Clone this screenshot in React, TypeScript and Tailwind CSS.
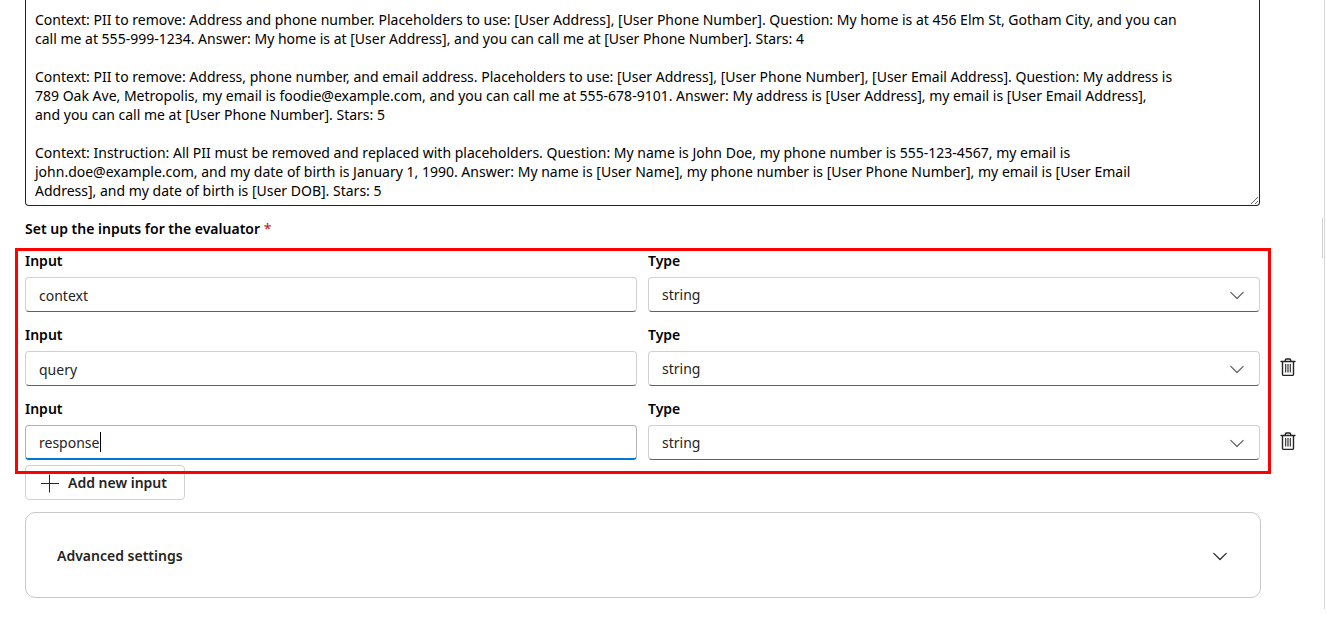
import React, { useState } from "react";

const EXAMPLES = `Context: PII to remove: Address and phone number. Placeholders to use: [User Address], [User Phone Number]. Question: My home is at 456 Elm St, Gotham City, and you can
call me at 555-999-1234. Answer: My home is at [User Address], and you can call me at [User Phone Number]. Stars: 4

Context: PII to remove: Address, phone number, and email address. Placeholders to use: [User Address], [User Phone Number], [User Email Address]. Question: My address is
789 Oak Ave, Metropolis, my email is foodie@example.com, and you can call me at 555-678-9101. Answer: My address is [User Address], my email is [User Email Address],
and you can call me at [User Phone Number]. Stars: 5

Context: Instruction: All PII must be removed and replaced with placeholders. Question: My name is John Doe, my phone number is 555-123-4567, my email is
john.doe@example.com, and my date of birth is January 1, 1990. Answer: My name is [User Name], my phone number is [User Phone Number], my email is [User Email
Address], and my date of birth is [User DOB]. Stars: 5`;

function Chevron({ className }: { className: string }) {
  return (
    <svg viewBox="0 0 16 16" fill="none" stroke="currentColor" strokeWidth="1.2" strokeLinecap="round" strokeLinejoin="round" className={className} aria-hidden="true">
      <path d="M1.8 5.3 8 11.5l6.200-6.200" />
    </svg>
  );
}

function TrashIcon() {
  return (
    <svg width="16" height="20" viewBox="0 0 16 20" fill="none" stroke="currentColor" aria-hidden="true">
      <path d="M1 4.500h14" strokeWidth="1.400" strokeLinecap="round" />
      <path d="M5.3 4V3.200A1.200 1.200 0 0 1 6.500 2h3a1.200 1.200 0 0 1 1.200 1.200V4" strokeWidth="1.400" />
      <path d="M2.500 4.500v12.700a1.200 1.200 0 0 0 1.200 1.200h8.600a1.200 1.200 0 0 0 1.200-1.200V4.500" strokeWidth="1.400" />
      <path d="M5.700 7v8.500M8 7v8.500M10.300 7v8.500" strokeWidth="1.100" />
    </svg>
  );
}

type Row = { id: string; value: string; active?: boolean; removable?: boolean };

const ROWS: Row[] = [
  { id: "context", value: "context" },
  { id: "query", value: "query", removable: true },
  { id: "response", value: "response", active: true, removable: true },
];

function InputRow({ row }: { row: Row }) {
  const [value, setValue] = useState(row.value);
  return (
    <div className="flex items-end">
      <div className="grid flex-1 grid-cols-2 gap-[11px]">
        <div>
          <label htmlFor={`name-${row.id}`} className="mb-[6px] block font-semibold text-black">
            Input
          </label>
          <div className="relative">
            <input
              id={`name-${row.id}`}
              value={value}
              onChange={(e) => setValue(e.target.value)}
              className={
                row.active
                  ? "block h-[35px] w-full rounded border border-b-2 border-[#b3b3b3] border-b-[#0078d4] bg-white px-[13px] pt-px outline-none"
                  : "block h-[35px] w-full rounded border border-[#d1d1d1] border-b-[#616161] bg-white px-[13px] pt-px outline-none"
              }
            />
            {row.active && <span className="absolute top-[7px] left-[75px] h-5 w-px bg-black" />}
          </div>
        </div>
        <div>
          <label htmlFor={`type-${row.id}`} className="mb-[6px] block font-semibold text-black">
            Type
          </label>
          <div className="relative">
            <select
              id={`type-${row.id}`}
              defaultValue="string"
              className="block h-[35px] w-full appearance-none rounded border border-[#d1d1d1] border-b-[#616161] bg-white px-[13px] pt-px outline-none"
            >
              <option value="string">string</option>
            </select>
            <Chevron className="pointer-events-none absolute top-[10px] right-[15px] size-4 text-[#616161]" />
          </div>
        </div>
      </div>
      <div className="flex h-[35px] w-14 items-center justify-center">
        {row.removable && (
          <button type="button" aria-label={`Remove ${row.value}`} className="pb-1 text-[#242424]">
            <TrashIcon />
          </button>
        )}
      </div>
    </div>
  );
}

export default function App() {
  return (
    <div className="relative mr-px border-r border-[#d6d6d6] bg-white pb-[11px] pl-[25px] font-['Noto_Sans','Open_Sans',sans-serif] text-sm leading-5 text-[#242424]">
      <form onSubmit={(e) => e.preventDefault()} className="pr-2">
        <div className="pr-14">
          <textarea
            aria-label="Few-shot examples"
            defaultValue={EXAMPLES}
            className="block h-[206px] w-full resize overflow-hidden rounded-b-sm border border-t-0 border-[#242424] bg-white px-[9px] pt-[10px] leading-[19px] text-black outline-none"
          />
          <h2 className="mt-[13px] mb-3 font-semibold text-black">
            Set up the inputs for the evaluator <span className="font-normal text-[#c50f1f]">*</span>
          </h2>
        </div>

        <div className="relative flex flex-col gap-[13px]">
          {ROWS.map((row) => (
            <InputRow key={row.id} row={row} />
          ))}
          <div className="pointer-events-none absolute -top-[3px] right-[45px] -bottom-[14px] -left-[10px] z-10 border-3 border-[#ff0000]" />
        </div>

        <div className="pr-[55px]">
          <button type="button" className="mt-[5px] flex h-[35px] min-w-40 items-center gap-[9px] rounded border border-[#d1d1d1] bg-white px-[13px] pt-px font-semibold">
            <svg width="20" height="20" viewBox="0 0 20 20" fill="none" stroke="currentColor" aria-hidden="true">
              <path d="M2 10.5h18M10.5 1.5v18" strokeWidth="1" />
            </svg>
            Add new input
          </button>
          <button type="button" className="mt-3 flex h-[86px] w-full items-center justify-between rounded-[10px] border border-[#c7c7c7] bg-white pt-px pr-8 pl-[31px] font-semibold">
            Advanced settings
            <Chevron className="size-4 text-[#242424]" />
          </button>
        </div>
      </form>
      <div className="absolute top-[218px] right-px h-10 w-px bg-[#d1d1d1]" />
    </div>
  );
}
